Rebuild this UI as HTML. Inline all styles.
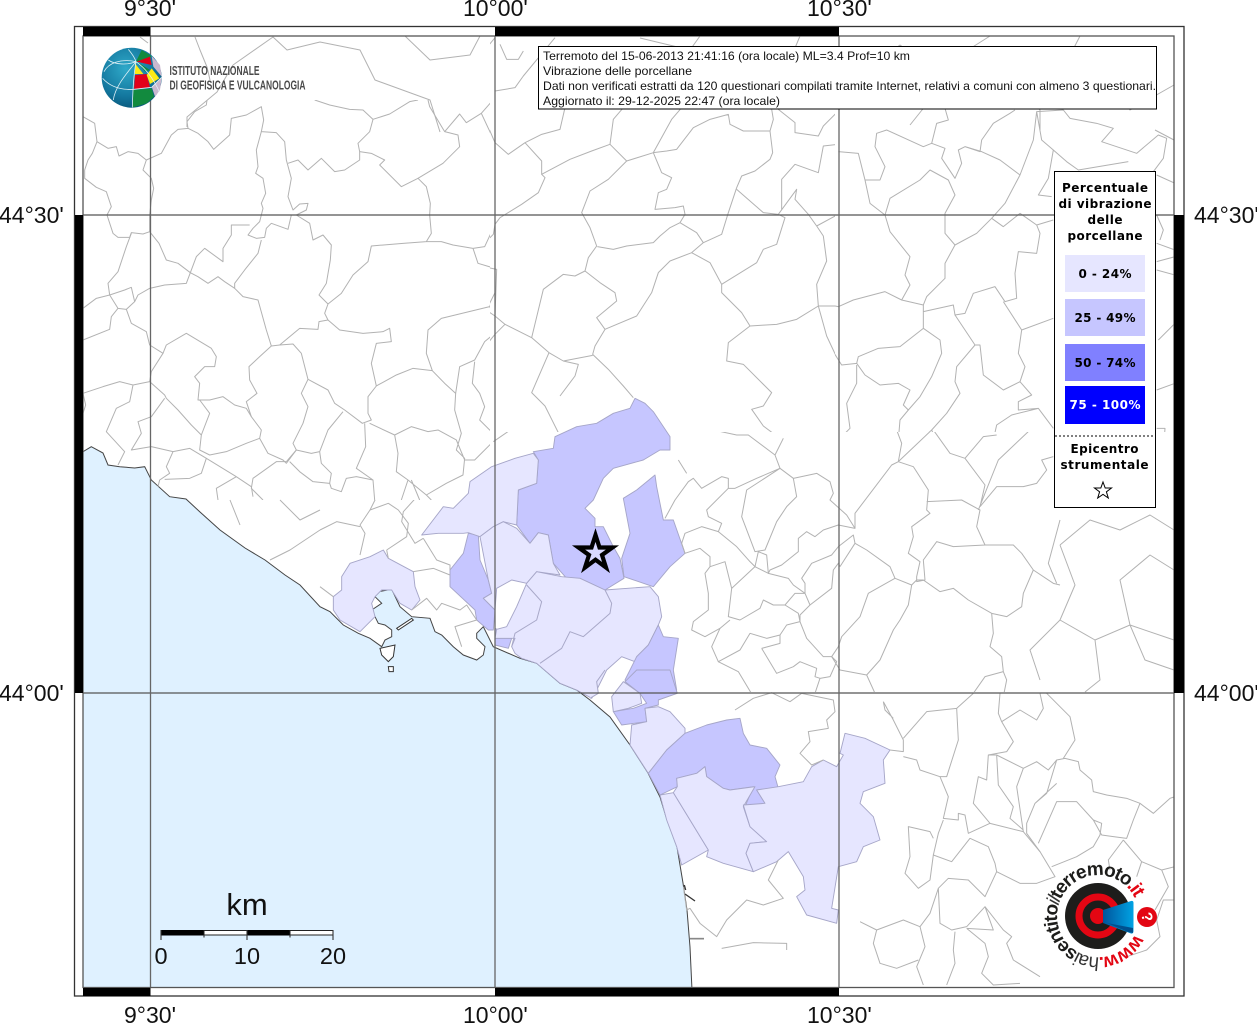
<!DOCTYPE html>
<html><head><meta charset="utf-8"><title>Vibrazione delle porcellane</title>
<style>html,body{margin:0;padding:0;background:#fff;width:1257px;height:1024px;overflow:hidden}svg{display:block}
.b{fill:none;stroke:#b2b2b2;stroke-width:3;stroke-linejoin:round}
.p{stroke:#a6a6c8;stroke-width:2.8;stroke-linejoin:round}
.m{fill:#c6c6ff}.l{fill:#e6e6ff}
.a{font:23px "Liberation Sans",sans-serif;fill:#111}
.t{font:12px "Liberation Sans",sans-serif;fill:#111}
.g{font:bold 12px "DejaVu Sans",sans-serif;fill:#000;text-anchor:middle}
.s{filter:blur(.3px)}
</style></head><body>
<svg width="1257" height="1024" viewBox="0 0 1257 1024" xmlns="http://www.w3.org/2000/svg">
<defs>
<clipPath id="c"><rect x="83" y="36" width="1091" height="951"/></clipPath>
<clipPath id="c8"><rect x="83" y="100" width="407" height="400"/></clipPath>
<clipPath id="c9"><rect x="490" y="36" width="345" height="396"/></clipPath>
<clipPath id="c10"><rect x="835" y="100" width="339" height="332"/></clipPath>
<clipPath id="c11"><rect x="660" y="432" width="514" height="260"/></clipPath>
<clipPath id="c5"><rect x="83" y="500" width="407" height="200"/><rect x="490" y="432" width="170" height="260"/></clipPath>
<clipPath id="c6"><rect x="590" y="692" width="270" height="295"/></clipPath>
<clipPath id="c12"><rect x="860" y="692" width="314" height="295"/></clipPath>
<radialGradient id="gb" cx=".4" cy=".35" r=".75"><stop offset="0" stop-color="#2fa9c9"/><stop offset=".6" stop-color="#14789f"/><stop offset="1" stop-color="#064f72"/></radialGradient>
<linearGradient id="cone" x1="0" x2="1"><stop offset="0" stop-color="#00559c"/><stop offset="1" stop-color="#00a3e4"/></linearGradient>
<path id="arc" d="M1135,934A41,41 0 1 1 1134.5,897.4"/>
</defs>
<rect width="1257" height="1024" fill="#fff"/>
<g clip-path="url(#c)">
<path fill="#dff1ff" stroke="#444" stroke-width="1" d="M83,451.7L91.3,446.7L103,453L108,465L119.7,466.7L134.7,468L144.7,466.7L151.3,480L169.7,496.7L186,499L200,512L220,530L245,548L265,560L285,575L300,585L320,606.7L330,611.7L343.3,625L358.3,633.3L370,638.3L381.7,646.7L385,640L391.7,636.7L391.7,630L385,625L378.3,623.3L375,616.7L371.7,610L381.7,603.3L375,596.7L378.3,591.7L391.7,589.3L400,606.7L411.7,616.7L430,618.3L435,631.7L441.7,635L453.3,646.7L463.3,655L476.7,660L483.3,655L485,646.7L476.7,638.3L476.7,633.3L483.3,626.7L493.3,646.7L520,658.3L536.7,663.3L560,683.3L576.7,690L590,700L610,717L630,745L648,773L660,797L667,820L677,847L683,883L687,910L690,947L692,990L83,990Z"/>
<!-- z5 polygons -->
<g transform="translate(320,390) scale(.33333)">
<path class="p m" d="M640,185L700,175L705,140L770,110L830,100L880,70L930,55L945,25L975,40L1000,65L1050,140L1050,180L1020,180L970,210L880,235L850,265L820,330L795,355L825,385L825,410L850,410L880,470L900,505L912,565L855,600L780,565L740,565L700,520L685,435L655,428L630,460L590,405L595,300L650,280L655,210Z"/>
<path class="p m" d="M1005,255L1010,290L1030,390L1060,390L1095,490L1050,530L1000,590L912,560L905,505L930,430L910,325L950,300Z"/>
<path class="p m" d="M445,430L475,435L480,510L505,570L515,610L490,625L525,660L520,720L505,720L470,690L465,660L390,590L390,540L430,490Z"/>
<path class="p m" d="M525,745L575,745L565,775L525,765ZM525,715L535,720L540,745L525,745Z"/>
<path class="p l" d="M305,435L370,350L400,355L445,310L450,275L515,230L585,205L640,190L655,210L650,280L595,300L590,405L550,395L520,410L480,440L445,428L430,430L355,430Z"/>
<path class="p l" d="M480,440L520,410L550,395L590,415L630,460L655,428L685,435L700,520L720,555L650,545L620,580L575,570L530,595L525,660L490,625L515,610L505,570Z"/>
<path class="p l" d="M525,745L530,718L560,710L590,650L620,580L650,545L725,560L780,565L855,600L990,590L1015,620L1025,680L1015,705L985,765L950,800L945,815L905,800L860,840L830,900L815,925L770,900L720,880L650,820L605,805L585,790L575,770L585,745Z"/>
<path class="p m" d="M1015,705L1030,740L1075,745L1060,840L1070,900L1000,910L930,900L915,870L950,800L985,765Z"/>
<path class="b" style="stroke:#a8a8c8" d="M620,585L665,635L650,690L585,730L575,770M855,600L875,640L870,670L790,740L750,725L725,775L660,820"/>
<path class="p l" d="M40,620L65,600L65,560L90,520L150,500L190,480L205,505L280,545L285,590L300,630L275,660L240,640L215,600L185,600L165,620L155,640L165,680L120,725L60,690L40,660Z"/>
</g>
<g clip-path="url(#c5)"><g class="b s" transform="translate(320,390) scale(.33333)">
<path d="M30,0L70,60L125,100L155,70L140,40L155,0M70,60L30,120L10,165L0,190M130,110L135,170L110,230L150,260L165,330L150,360L120,405L135,430L120,495M150,360L205,340L235,360L265,400L260,440L200,480M0,420L50,395L120,410M300,310L250,365L245,395L285,460L310,445M310,445L350,510L390,525L390,540M200,480L205,505M280,545L340,535L390,555M275,660L320,625L350,660L365,640L420,660L440,645L470,690L405,710L425,770M0,590L40,620M520,155L600,100L640,60L640,0"/>
</g></g>
<g transform="translate(320,390) scale(.33333)">
<path fill="#fff" stroke="#333" stroke-width="3" d="M180,775L225,765L220,800L205,815L185,795ZM205,830L220,830L220,845L207,845ZM230,715L275,685L280,690L235,720Z"/>
</g>
<!-- z6 polygons -->
<g transform="translate(590,670) scale(.33333)">
<path class="p l" d="M0,0L45,0L20,35L25,70L0,85Z" style="stroke:none"/>
<path class="b" style="stroke:#a8a8c8" d="M45,0L20,35L25,70L0,85"/>
<path class="p m" d="M105,35L140,0L240,0L262,70L205,90L205,105L165,115L170,155L95,165L70,125L130,115L170,100L150,70Z"/>
<path class="p l" d="M100,35L150,70L155,100L115,115L70,125L65,80Z"/>
<path class="p l" d="M165,115L205,110L240,125L285,175L285,190L230,240L175,310L120,225L125,165L170,155Z"/>
<path class="p m" d="M175,310L230,240L285,190L350,165L410,150L450,145L460,190L480,225L530,235L570,285L555,320L565,355L500,360L525,400L465,410L490,350L420,360L400,355L350,320L345,290L320,310L260,325L262,350L210,375Z"/>
<path class="p l" d="M210,375L250,368L355,540L275,585L260,530L230,450Z"/>
<path class="p l" d="M250,368L262,350L260,325L320,310L345,290L350,320L400,355L420,360L495,350L460,410L480,470L530,515L480,520L468,550L490,605L400,580L350,560L355,540Z"/>
<path class="p l" d="M460,405L525,400L500,360L565,350L640,335L665,290L700,270L740,290L760,255L750,250L765,190L825,205L900,240L880,270L885,340L820,365L810,400L850,440L870,510L820,530L800,575L745,590L725,715L745,720L740,760L650,735L620,680L645,660L640,620L595,545L560,575L490,605L468,550L480,520L530,515L480,470Z"/>
</g>
<g clip-path="url(#c6)"><g class="b s" transform="translate(590,670) scale(.33333)">
<path d="M280,650L290,720L300,715L330,760L380,800L410,750L470,690L520,705L580,685L535,630L565,570M435,120L490,85L545,68L600,95L635,70L730,90L735,125L710,150L715,175L655,185L660,215L630,250L665,285L700,270M395,835L490,818L590,820L590,840"/>
<path fill="none" stroke="#333" stroke-width="4" style="stroke:#333" d="M285,672L315,693M283,645L287,660"/>
<path fill="none" style="stroke:#888;stroke-width:5" d="M300,806L342,806"/>
</g></g>
<!-- z8 -->
<g clip-path="url(#c8)"><g class="b s" transform="translate(83,100) scale(.33333)">
<path d="M0,50L35,70L42,125L28,160L15,180L5,210L5,235L40,262L70,275L85,320L72,345L90,400L105,412L140,412L145,398L180,402L200,395"/>
<path d="M42,125L75,145L100,140L108,168L135,155L165,160L190,180L180,210L205,235L212,265L205,300L200,345L200,395L228,430L250,480L285,490L322,518"/>
<path d="M190,180L235,160L265,105L285,88L315,85L345,100L375,125L392,148L440,105L445,55L490,45L535,20L542,60L535,95L580,98L605,125L610,180L625,235L615,290L630,330L650,312L675,310L670,330L640,345L680,370L690,420L720,405L745,435L742,480L730,550L708,585L735,612"/>
<path d="M315,85L312,65L335,35L370,15L372,0M535,95L520,150L525,200L518,220L540,235L548,280L535,310L540,325L530,365L510,385L495,405L520,415L545,412L550,385L565,370L615,388L625,345"/>
<path d="M695,0L740,15L800,28L840,30L870,58L920,42L980,5L1005,0M870,58L860,95L825,130L830,155L830,180L785,210L755,215L715,175L675,210L645,180L615,190"/>
<path d="M830,155L865,160L905,180L890,195L955,260L1005,235L1030,260L1042,310L1040,345L1045,400L1030,425L960,430L865,438L855,485L810,525L775,580L735,612L725,640L735,660L770,690L840,700L900,695L920,685L925,725L880,730L865,790L880,858"/>
<path d="M1005,235L1080,190L1130,140L1125,105L1085,95L1040,20L1035,0M1085,95L1130,42L1150,68L1195,40L1230,0M1195,40L1230,115L1235,140L1260,155"/>
<path d="M1030,425L1075,425L1110,435L1170,445L1205,440L1235,375L1260,360M1170,445L1185,490L1235,505L1248,545L1220,620L1075,655L1035,690L1030,760L1048,812L1085,850L1118,880L1130,800L1175,780L1205,725L1235,700L1260,695M1220,620L1235,645L1260,660"/>
<path d="M880,858L940,825L990,805L1048,812M880,858L855,890L855,940L865,960L838,970L785,930L755,910L735,870L675,838L655,760L630,732L590,735L565,738L550,690L525,600L480,590L455,565L455,550L485,510L525,460L535,420"/>
<path d="M590,735L650,685L705,688L708,665L735,660M565,738L530,770L498,800L500,840L522,880L490,905L505,950L535,990L530,1015L555,1060L600,1080L610,1090L640,1050L630,1030L660,970L675,920L655,880L675,838"/>
<path d="M455,565L425,545L405,530L375,550L345,530L322,518L340,470L365,445L420,485L420,445L445,405L445,375L500,375M322,518L310,550L245,555L200,565L165,585L155,605L130,628L105,625L80,585L75,550L105,515L130,440L145,400"/>
<path d="M80,585L40,595L0,625M80,585L125,570L145,562L155,605M105,625L85,650L80,688L0,720M130,628L145,670L190,695L200,735L240,760L250,735L310,700L385,745L400,770L395,800L365,800L335,830L350,850L345,900L380,900L420,890L455,915L490,925L505,950"/>
<path d="M240,760L205,815L200,845L150,855L110,845L60,860L0,880L8,915L0,940M200,845L245,885L250,895L285,930L325,975L355,1005L350,1050L380,1065L430,1055L490,1030L530,1015M150,855L140,905L100,925L70,995L125,1055L105,1095"/>
<path d="M245,895L205,950L165,965L175,1000L145,1050L205,1040L270,1055L250,1100L260,1120L230,1140L225,1160M355,1005L380,940L350,900M270,1055L320,1045L370,1075L460,1130L505,1160L510,1190M370,1075L355,1120L320,1135L245,1138M460,1130L400,1165L405,1200"/>
<path d="M610,1085L580,1085L510,1135L505,1165L540,1200M610,1085L640,1050L685,1060L710,1055L715,1090L745,1120L740,1150L690,1145L650,1115L620,1085M710,1055L735,990L780,935M740,1150L745,1165L775,1175L790,1135L820,1130L870,1140L875,1200M845,970L848,1040L820,1105L870,1140"/>
<path d="M860,970L935,1005L945,1060L940,1115L975,1140L1030,1185L1090,1150L1140,1125L1145,1075L1120,1050L1135,1000L1115,930L1118,880M935,1005L985,980L1035,995L1065,990L1120,1020L1145,1080L1175,1080L1235,1020L1260,1000M1175,785L1168,850L1190,880L1205,920L1190,960L1225,995L1225,1020M975,1140L955,1200M1030,1185L1045,1200M985,1140L1010,1200"/>
</g></g>
<!-- z9 -->
<g clip-path="url(#c9)"><g class="b s" transform="translate(480,36) scale(.33333)">
<path d="M0,215L45,320L85,355L135,320L185,295L240,280L255,215M45,165L105,155L130,120L225,5M135,320L185,375L185,415L270,370L335,345L390,325L440,375L520,350L575,250L605,215M390,325L400,250L430,215"/>
<path d="M520,350L560,345L590,340L640,275L690,250L745,235L750,265L790,285L870,285L878,350L870,370L825,405L785,420L770,455L745,530L725,595L670,620L635,650L570,675L535,710L515,770L470,840L375,880L350,845L410,795L405,770L360,740L315,705L325,665L350,630L330,575L305,530L330,465L385,430L440,375"/>
<path d="M520,350L545,410L575,425L560,460L535,470L525,520L585,515L610,510L615,535L600,560L570,575L540,600L520,620L440,630L400,640L352,632M600,560L650,590L670,620M185,415L195,425L175,470L125,505L60,545L45,565L40,595L0,635"/>
<path d="M635,650L690,680L725,745L725,770L785,830L810,870L890,865L950,850L1015,810L1010,745L1040,675L1030,600L1010,570L1075,535L1140,560L1150,580L1200,540M725,745L830,680L850,640L890,625L915,545L895,535L850,530L770,460M895,535L950,460L945,490L985,535L1010,570M905,520L905,430L945,385L1015,410L1030,330L1075,325"/>
<path d="M875,220L880,250L870,285M895,220L945,260L945,290L1015,300L1030,270L1075,225L1100,215M1015,810L1075,810L1130,795L1200,770M1015,810L1040,900L1080,985L1130,980L1200,1020M1130,980L1100,1100L1120,1200M1130,980L1200,935"/>
<path d="M810,870L745,920L740,975L790,985L860,1055L875,1070L850,1110L815,1120L850,1170L890,1200M375,880L345,930L338,955L385,1000L430,1050L460,1085M338,958L250,975L207,950L155,905L75,865L45,840L0,810M155,905L190,760L250,715L285,720L315,705M207,950L155,1070L195,1110L215,1150L240,1200M250,975L295,985L285,1020L240,1080M45,840L50,700L0,690M45,770L25,810M75,865L45,895L0,950M0,60L45,5M60,25L80,70L115,70L130,45"/>
</g></g>
<!-- z10 -->
<g clip-path="url(#c10)"><g class="b s" transform="translate(830,100) scale(.33333)">
<path d="M25,155L85,160L105,240L150,240L165,200L135,140L140,100L170,90L280,140L305,130L320,70L355,60L345,25M105,240L120,310L165,345L180,395L240,470L225,525L240,555L215,600L280,615L290,590L345,535L345,490L375,435L345,400L345,340L375,285L355,240L300,210L270,240L180,295L165,345"/>
<path d="M305,130L345,145L335,175L375,235L395,190L385,150L405,140L450,155L455,120L490,70L540,40L555,30M405,140L455,155L510,180L570,225L525,310L485,355L440,400L375,435M570,225L610,120L620,35L635,120L670,150L710,185L745,210L895,185M620,35L700,30L720,55L800,70L850,85L815,125L920,160L985,105L1010,115L1000,175L970,215M670,150L655,235L625,285L665,290"/>
<path d="M485,355L520,380L570,340L620,375L670,360M620,375L630,400L620,460L565,455L555,520L560,595L525,605L495,560L430,580L405,640L375,645L370,615L280,635L280,615M0,615L25,620L70,600L165,575L215,600M280,635L280,685L330,720L335,760L305,830L270,890L235,930L220,915L240,870L205,850L150,855L105,825L80,790L85,770L145,745L210,740L280,685M80,790L35,795L0,740"/>
<path d="M80,795L80,850L50,910L60,985L25,1020L0,1025M235,930L210,960L205,1020L215,1040L200,1085L130,1150L100,1200M375,645L435,735L380,800L375,845L390,880L350,940L305,990L200,1085M435,735L450,735L460,825L520,870L570,845L585,800L565,760L575,690L670,655M520,605L575,690M570,845L605,885L565,905L565,930L625,925L670,985M625,925L545,945L500,975L490,1020L405,1075L370,1080L355,1045L320,1025L305,990"/>
<path d="M980,225L1035,250M980,345L1000,390L990,420M980,430L1035,450M980,485L1035,470M980,510L1035,525M985,720L1035,670M980,870L1035,850M980,985L1005,985L1000,1060L980,1090"/>
</g></g>
<!-- z11 -->
<g clip-path="url(#c11)"><g class="b s" transform="translate(660,430) scale(.33333)">
<path d="M160,0L230,15L265,15L345,75L370,25M345,75L360,115L400,145L470,130L510,155L520,190L510,210L560,255L585,295L535,285L490,300L465,320L440,305L415,325L415,365L365,405L330,420L325,430L285,410L215,475M360,115L290,145L225,175L205,175L205,145L185,140L125,175L100,145L85,155L45,210L15,265"/>
<path d="M205,175L140,240L145,260L185,280L175,305L125,290L75,310L65,340L75,370L120,355L150,380L150,410L135,430L145,490L145,540L100,575L95,600L135,620L180,595L210,570M360,115L260,180L245,260L285,365L315,360L350,275L380,230L410,200L400,145"/>
<path d="M175,305L230,350L270,395L285,410L295,365L320,375L325,430L385,445L400,465L435,490L435,460L425,445L455,400L515,375L535,350L580,315L585,340M150,410L195,395L215,475L205,560L240,570L300,535L310,510L340,525L375,525L415,550L420,575L380,585L360,615L320,625L270,610L240,660L175,695L155,650L180,595"/>
<path d="M375,525L405,490L435,490L450,525L420,555L420,575L440,625L490,680L515,680L535,650M450,525L515,475L520,420L535,400L540,410M535,650L545,620L600,560L625,490L705,445L690,410L620,360L585,340L540,410M705,445L755,465L745,525L720,570L700,600L660,690L620,735L540,720L515,680M620,735L645,790M175,695L235,725L280,800"/>
<path d="M585,295L585,250L695,105L715,95L815,0M715,95L725,40L710,0M715,95L760,110L805,180L800,240L810,250L755,290L760,320L745,370L780,395L770,440L770,455L795,450L790,390L830,335L880,350L975,345L950,290L960,240L905,210L800,215"/>
<path d="M790,450L840,485L880,475L925,510L995,550L1040,560L1085,530L1090,490L1120,420L1180,460L1200,465M1120,420L1085,370L1060,345L975,345M755,465L770,450L790,450M995,550L1000,610L990,650L1025,680L1030,725L975,740L940,790L890,840M1030,725L1040,750L1030,800"/>
<path d="M955,240L975,190L1015,90L1110,0M960,230L1010,170L1090,170L1130,160L1160,120L1145,90L1180,80M915,85L975,165L960,230M820,0L870,70L915,85L970,20L1010,15"/>
<path d="M305,655L360,640L360,615M305,655L350,730L400,710L420,695L470,715L465,740L480,745L510,740L530,695L515,680M480,745L465,790M1200,270L1165,400L1190,460M55,90L80,130"/>
</g></g>
<!-- z12 -->
<g clip-path="url(#c12)"><g class="b s" transform="translate(860,680) scale(.33333)">
<path d="M70,65L100,120L130,180L130,215L90,210M70,65L75,90L100,115M130,175L200,95L290,85L295,180L260,290L240,290L180,270L170,240L130,230M240,290L265,350L250,415L295,420L295,400L315,405L325,460L390,430M290,85L340,40"/>
<path d="M420,40L415,100L425,125L460,185L440,215L385,225L380,300L355,290L340,370L390,430L490,455L540,515L585,590L530,610L480,610L410,575L405,550L385,500L330,475L275,545L220,525L235,460L250,420M220,525L210,600L175,625L135,580L150,530L145,440L210,455L220,475"/>
<path d="M410,575L375,650L325,600L265,595L235,625L240,730L275,750L320,740L375,680L400,750L320,745M375,680L430,750L455,770L440,790L460,840L540,890M235,625L210,700L180,740L195,800L170,860L190,915M0,725L50,750L40,790L60,850L110,865L175,840M50,750L130,720L180,740M285,755L280,810L285,850L260,915M320,745L375,790L385,830L365,880L400,915L480,910"/>
<path d="M385,225L410,225L490,265L470,320L490,455M410,225L415,315L460,380L450,415L490,450M490,265L530,245L565,270L590,240L615,235L655,245L660,270L695,300L700,335L740,345L800,355L840,370L820,420L800,475L760,470L725,465L700,420L650,365L590,365L535,490M590,310L525,370L500,430L500,460L540,515M590,240L575,290L560,340L525,370M700,420L725,430L720,465L700,500L650,530L575,560"/>
<path d="M790,480L745,540L750,570M790,480L845,545L905,570L925,620L885,690M840,370L880,400L930,355L945,350M845,545L830,590M945,560L905,570M945,660L910,660L890,720M425,125L480,90L530,120L550,85L540,40M560,40L630,110L645,180L610,235M890,720L900,770L860,810L800,830"/>
</g></g>
<!-- remaining real coords -->
<g class="b s" style="stroke-width:1">
<path d="M140,37L148,43M195,37L200,50L207,67L210,80M233,65L273,37L287,50L320,42L360,50L375,80L430,100L440,132M233,65L217,92L187,117L187,127M405,36L430,60L470,55L480,36M880,60L900,45L920,60L960,55L990,36M920,60L930,100L910,125M975,60L1010,80L1040,110L1040,130M1080,36L1060,75L1090,100L1120,90L1130,110L1174,85M1155,130L1174,140M800,36L790,60L840,75M700,36L690,50L640,38"/>
<path d="M1060,545L1090,520L1120,530L1150,515L1174,530M1060,545L1075,585L1060,620L1095,640L1130,625L1174,640M1130,625L1120,580L1150,555L1174,570M1060,620L1030,650L1040,680M1095,640L1100,680L1085,692M1130,625L1145,660L1174,670M230,500L240,525M280,500L300,520L320,510M320,530L290,550L270,560"/>
</g>
</g>
<!-- grid -->
<g fill="none">
<path d="M83,215H1174M83,693H1174" stroke="#555" stroke-width="1.2"/>
<path d="M150.500,36V987M495,36V987M839,36V987" stroke="#666" stroke-width="1.3"/>
<rect x="74.500" y="26.500" width="1109.500" height="969.500" stroke="#333" stroke-width="1.3"/>
<rect x="83" y="36" width="1091" height="951.500" stroke="#555" stroke-width="1.3"/>
</g>
<g fill="#000">
<rect x="83" y="27" width="67.500" height="9"/><rect x="495" y="27" width="344" height="9"/>
<rect x="83" y="988" width="67.500" height="8"/><rect x="495" y="988" width="344" height="8"/>
<rect x="75" y="215" width="8" height="478"/><rect x="1174" y="215" width="10" height="478"/>
</g>
<!-- axis labels -->
<g class="a">
<text x="124" y="16">9°30'</text><text x="463" y="16">10°00'</text><text x="807" y="16">10°30'</text>
<text x="124" y="1023">9°30'</text><text x="463" y="1023">10°00'</text><text x="807" y="1023">10°30'</text>
<text x="-1" y="223">44°30'</text><text x="-1" y="701">44°00'</text>
<text x="1194" y="223">44°30'</text><text x="1194" y="701">44°00'</text>
</g>
<!-- INGV logo -->
<circle cx="131.700" cy="77.700" r="30" fill="url(#gb)"/>
<g transform="scale(.33333)">
<path fill="#128a3e" d="M408,185L425,150L450,165L455,170L415,185ZM415,188L450,210L435,215ZM400,270L455,265L462,290L440,310L398,322Z"/>
<path fill="#e2001a" d="M410,185L450,170L455,195ZM405,225L440,222L450,262L402,268Z"/>
<path fill="#fdea14" d="M405,190L430,222L405,222ZM440,225L455,205L478,235L450,252Z"/>
<path fill="#c9b8cf" d="M455,168L480,195L485,230L460,200ZM455,260L485,232L480,270L465,290Z"/>
<path fill="none" stroke="#dff0f6" stroke-width="2.400" d="M408,185C380,220 345,260 340,300M408,185C400,230 398,280 397,322M408,185C360,175 325,190 312,215M385,148C395,160 405,175 408,185M408,185C430,200 455,225 478,275M325,180C345,195 385,195 408,185M308,235C335,265 370,270 402,268L455,262L485,232"/>
</g>
<g font-family="'Liberation Sans',sans-serif" font-size="12.500" font-weight="bold" fill="#4a4a4a">
<text x="169.500" y="75" textLength="90" lengthAdjust="spacingAndGlyphs">ISTITUTO NAZIONALE</text>
<text x="169.500" y="89.500" textLength="136" lengthAdjust="spacingAndGlyphs">DI GEOFISICA E VULCANOLOGIA</text>
</g>
<!-- title box -->
<rect x="538.500" y="46.500" width="618" height="62.500" fill="#fff" stroke="#000" stroke-width="1"/>
<g class="t">
<text x="543" y="60" textLength="367" lengthAdjust="spacingAndGlyphs">Terremoto del 15-06-2013 21:41:16 (ora locale) ML=3.4 Prof=10 km</text>
<text x="543" y="75" textLength="149" lengthAdjust="spacingAndGlyphs">Vibrazione delle porcellane</text>
<text x="543" y="90" textLength="613" lengthAdjust="spacingAndGlyphs">Dati non verificati estratti da 120 questionari compilati tramite Internet, relativi a comuni con almeno 3 questionari.</text>
<text x="543" y="105" textLength="237" lengthAdjust="spacingAndGlyphs">Aggiornato il: 29-12-2025 22:47 (ora locale)</text>
</g>
<!-- legend -->
<rect x="1054.500" y="171.500" width="101" height="336" fill="#fff" stroke="#000" stroke-width="1"/>
<rect x="1065" y="255" width="80" height="37" fill="#e6e6ff"/>
<rect x="1065" y="299" width="80" height="37" fill="#c6c6ff"/>
<rect x="1065" y="344" width="80" height="37" fill="#8080ff"/>
<rect x="1065" y="386" width="80" height="38" fill="#0000ff"/>
<g class="g">
<text x="1105" y="192" textLength="86" lengthAdjust="spacing">Percentuale</text>
<text x="1105" y="208" textLength="93" lengthAdjust="spacing">di vibrazione</text>
<text x="1105" y="224" textLength="35" lengthAdjust="spacing">delle</text>
<text x="1105" y="240" textLength="75" lengthAdjust="spacing">porcellane</text>
<text x="1105" y="278" textLength="53" lengthAdjust="spacing">0 - 24%</text>
<text x="1105" y="322" textLength="61" lengthAdjust="spacing">25 - 49%</text>
<text x="1105" y="367" textLength="61" lengthAdjust="spacing">50 - 74%</text>
<text x="1105" y="409" textLength="71" lengthAdjust="spacing" style="fill:#fff">75 - 100%</text>
<text x="1104.500" y="453" textLength="68" lengthAdjust="spacing">Epicentro</text>
<text x="1104.500" y="469" textLength="88" lengthAdjust="spacing">strumentale</text>
</g>
<path d="M1055,436H1155" stroke="#000" stroke-width="1" stroke-dasharray="2 2"/>
<path fill="#fff" stroke="#000" stroke-width="1" d="M1103,482L1105.200,488H1111.500L1106.400,491.800L1108.300,498L1103,494.300L1097.700,498L1099.600,491.800L1094.500,488H1100.800Z"/>
<!-- epicentre star -->
<path fill="#d8d8ff" stroke="#000" stroke-width="4.200" stroke-linejoin="miter" stroke-miterlimit="10" d="M595.500,535L599.500,547.500H612.500L602,555L606,567.500L595.500,559.700L585,567.500L589,555L578.500,547.500H591.500Z"/>
<!-- scale bar -->
<g>
<rect x="161" y="930" width="43" height="5.500" fill="#000"/><rect x="204" y="930.500" width="43" height="4.500" fill="#fff" stroke="#222" stroke-width="1"/>
<rect x="247" y="930" width="43" height="5.500" fill="#000"/><rect x="290" y="930.500" width="43" height="4.500" fill="#fff" stroke="#222" stroke-width="1"/>
<path d="M161,930V940M247,930V940M333,930V940M204,935V937.500M290,935V937.500" stroke="#333" stroke-width="1.100"/>
</g>
<g font-family="'Liberation Sans',sans-serif" fill="#111" text-anchor="middle">
<text x="247" y="915" font-size="31">km</text>
<text x="161" y="964" font-size="23.500">0</text><text x="247" y="964" font-size="23.500">10</text><text x="333" y="964" font-size="23.500">20</text>
</g>
<!-- haisentito logo -->
<circle cx="1098" cy="916" r="33" fill="#1d1d1b"/>
<circle cx="1098" cy="916" r="19" fill="none" stroke="#e30613" stroke-width="7"/>
<circle cx="1098" cy="916" r="8" fill="#e30613"/>
<path d="M1103,910L1131,901Q1133.500,900.500 1133.500,903V931Q1133.500,934 1131,933.500L1103,923Z" fill="url(#cone)"/>
<path d="M1107,923L1133,928V933L1128,932Z" fill="#00508f"/>
<circle cx="1147" cy="917" r="10" fill="#e30613"/>
<text x="1147" y="917" transform="rotate(75 1147 917)" font-family="'Liberation Sans',sans-serif" font-weight="bold" font-size="15" fill="#fff" text-anchor="middle" dy="5">?</text>
<text font-family="'Liberation Sans',sans-serif" font-size="19" fill="#1d1d1b"><textPath href="#arc" textLength="220" lengthAdjust="spacing"><tspan font-weight="bold" fill="#e30613">www.</tspan><tspan fill="#333">hai</tspan><tspan font-weight="bold">sentito</tspan><tspan fill="#333" font-style="italic">il</tspan><tspan font-weight="bold">terremoto</tspan><tspan font-weight="bold" fill="#e30613">.it</tspan></textPath></text>
</svg>
</body></html>
